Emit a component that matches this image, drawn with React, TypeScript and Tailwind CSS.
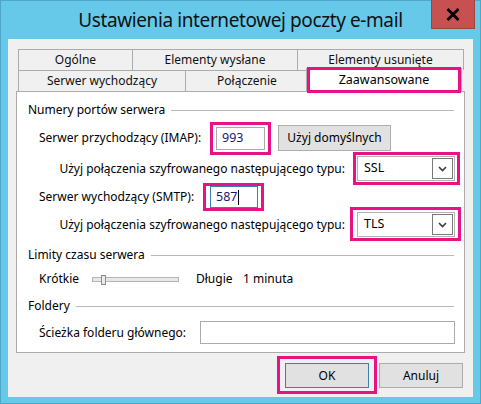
import type { ReactNode } from "react";

const PINK = "border-[#ea1187]";

function Mark({ inset }: { inset: string }) {
  // magenta call-out frame drawn on top of a control
  return (
    <span
      className={`pointer-events-none absolute z-20 border-[3px] ${PINK} ${inset}`}
      aria-hidden
    />
  );
}

function Tab({
  label,
  width,
  first,
}: {
  label: string;
  width: string;
  first?: boolean;
}) {
  return (
    <div
      className={[
        "flex h-[21px] items-center justify-center border border-b-0 border-[#acacac] bg-[#f0f0f0] text-[12px] leading-none text-[#111]",
        width,
        first ? "" : "-ml-px",
      ].join(" ")}
    >
      {label}
    </div>
  );
}

function GroupHeader({ title, mt }: { title: string; mt: string }) {
  return (
    <div className={`flex h-[20px] items-center pl-[11px] pr-[10px] ${mt}`}>
      <span className="text-[12px] leading-none text-black">{title}</span>
      <span className="ml-[6px] h-px flex-1 bg-[#b9b9b9]" />
    </div>
  );
}

function Chevron() {
  return (
    <svg width="9" height="6" viewBox="0 0 9 6" aria-hidden>
      <path d="M1 1 L4.5 4.5 L8 1" fill="none" stroke="#3c3c3c" strokeWidth="1.6" />
    </svg>
  );
}

function Select({ value, mark }: { value: string; mark: string }) {
  return (
    <div className="relative flex h-[25px] w-[98px] items-center border border-[#b3b3b3] bg-white">
      <span className="flex-1 pl-[6px] text-[12.5px] leading-none text-black">{value}</span>
      <span className="mr-[1px] flex h-[21px] w-[21px] items-center justify-center border border-[#7a7a7a] bg-white">
        <Chevron />
      </span>
      <Mark inset={mark} />
    </div>
  );
}

function Button({
  children,
  width,
  primary,
}: {
  children: ReactNode;
  width: string;
  primary?: boolean;
}) {
  return (
    <div
      className={[
        "flex h-[25px] items-center justify-center bg-[#e1e1e1] text-[12px] leading-none text-black",
        primary ? "border border-[#3c7fb1]" : "border border-[#adadad]",
        width,
      ].join(" ")}
    >
      {children}
    </div>
  );
}

export default function App() {
  return (
    <div className="flex h-[404px] w-[481px] flex-col border border-[#4fa7c8] bg-[#66c9ea] font-['Noto_Sans',sans-serif]">
      {/* title bar */}
      <div className="relative flex h-[38px] shrink-0 items-center justify-center">
        <span className="text-[19px] leading-none tracking-[-0.4px] text-[#111]">
          Ustawienia internetowej poczty e-mail
        </span>
        <div className="absolute -top-px right-[5px] flex h-[29px] w-[44px] items-center justify-center border border-t-0 border-[#a34040] bg-[#c75050]">
          <svg width="14" height="13" viewBox="0 0 14 13" aria-hidden>
            <path d="M1.5 1 L12.5 12 M12.5 1 L1.5 12" stroke="#000" strokeWidth="2.8" />
          </svg>
        </div>
      </div>

      {/* client area */}
      <div className="mx-[7px] flex flex-1 flex-col bg-[#f0f0f0] px-[8px] pt-[10px]">
        {/* tab rows */}
        <div className="flex pl-[2px]">
          <Tab label="Ogólne" width="w-[115px]" first />
          <Tab label="Elementy wysłane" width="w-[166px]" />
          <Tab label="Elementy usunięte" width="w-[167px]" />
        </div>
        <div className="flex h-[21px] items-end pl-[2px]">
          <Tab label="Serwer wychodzący" width="w-[168px]" first />
          <Tab label="Połączenie" width="w-[124px]" />
          <div className="relative z-10 -ml-[3px] mb-[-1px] flex h-[24px] w-[156px] items-center justify-center border border-b-0 border-[#acacac] bg-white text-[12.5px] leading-none text-black">
            Zaawansowane
            <Mark inset="-top-[2px] left-0 right-0 -bottom-px" />
          </div>
        </div>

        {/* tab page */}
        <div className="flex h-[262px] flex-col border border-[#acacac] bg-white">
          <GroupHeader title="Numery portów serwera" mt="mt-[8px]" />

          <div className="mt-[5px] flex h-[26px] items-center pl-[22px]">
            <span className="w-[177px] text-[12px] leading-none text-black">
              Serwer przychodzący (IMAP):
            </span>
            <div className="relative flex h-[23px] w-[49px] items-center border border-[#ababab] bg-white pl-[5px] text-[12.5px] leading-none text-[#1b1b6b]">
              993
              <Mark inset="-left-[7px] -right-[7px] -top-[6px] -bottom-[6px]" />
            </div>
            <div className="ml-[13px]">
              <Button width="h-[26px] w-[113px]">Użyj domyślnych</Button>
            </div>
          </div>

          <div className="mt-[5px] flex h-[25px] items-center justify-end gap-[12px] pr-[9px]">
            <span className="text-[12px] leading-none text-black">
              Użyj połączenia szyfrowanego następującego typu:
            </span>
            <Select value="SSL" mark="-left-[5px] -right-[6px] -top-[5px] -bottom-[5px]" />
          </div>

          <div className="mt-[5px] flex h-[22px] items-center pl-[22px]">
            <span className="w-[171px] text-[12px] leading-none text-black">
              Serwer wychodzący (SMTP):
            </span>
            <div className="relative flex h-[22px] w-[48px] items-center border border-[#3c7fb1] bg-white pl-[5px] text-[12.5px] leading-none text-[#1b1b6b]">
              587
              <span className="ml-px h-[15px] w-px bg-black" />
              <Mark inset="-left-[8px] -right-[7px] -top-[4px] -bottom-[4px]" />
            </div>
          </div>

          <div className="mt-[4px] flex h-[25px] items-center justify-end gap-[12px] pr-[9px]">
            <span className="text-[12px] leading-none text-black">
              Użyj połączenia szyfrowanego następującego typu:
            </span>
            <Select value="TLS" mark="-left-[8px] -right-[7px] -top-[6px] -bottom-[5px]" />
          </div>

          <GroupHeader title="Limity czasu serwera" mt="mt-[8px]" />

          <div className="mt-[4px] flex h-[20px] items-center pl-[22px] text-[12px] leading-none text-black">
            <span className="w-[53px]">Krótkie</span>
            {/* timeout slider */}
            <div className="relative h-[5px] w-[87px] border border-[#b5b5b5] bg-[#e7e7e7]">
              <span className="absolute -top-[3px] left-[8px] h-[10px] w-[5px] border border-[#8e8e8e] bg-[#e9e9e9]" />
            </div>
            <span className="ml-[17px] w-[47px]">Długie</span>
            <span>1 minuta</span>
          </div>

          <GroupHeader title="Foldery" mt="mt-[7px]" />

          <div className="mt-[5px] flex h-[23px] items-center pl-[22px]">
            <span className="w-[161px] text-[12px] leading-none text-black">
              Ścieżka folderu głównego:
            </span>
            <div className="h-[23px] w-[255px] border border-[#ababab] bg-white" />
          </div>
        </div>

        {/* dialog buttons */}
        <div className="mt-[10px] flex justify-end gap-[10px] pr-[2px]">
          <div className="relative">
            <Button width="w-[84px]" primary>
              OK
            </Button>
            <Mark inset="-left-[8px] -right-[8px] -top-[7px] -bottom-[6px]" />
          </div>
          <Button width="w-[84px]">Anuluj</Button>
        </div>
      </div>
      <div className="h-[6px] shrink-0" />
    </div>
  );
}
